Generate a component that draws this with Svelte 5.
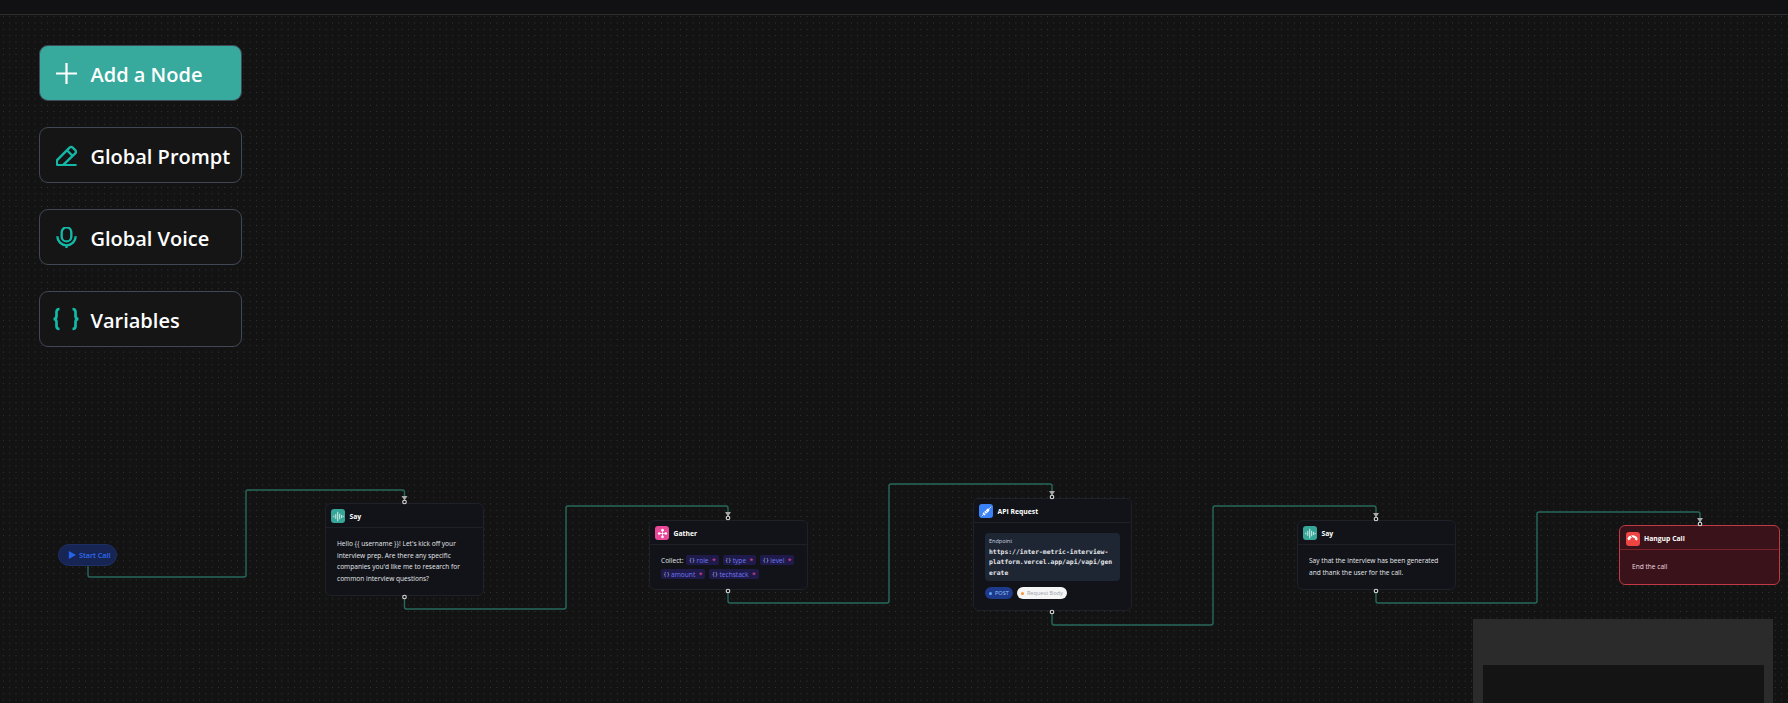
<script>
  const edges = [
    [88,566,577,246,490,404.5,497],
    [404.5,597,609,566,506,728,516],
    [728,591,603,889,484,1052,495],
    [1052,612,625,1213,506,1376,517],
    [1376,591,603,1537,512,1700,522]
  ];
  const r = 2;
  function d([x1,y1,y2,x2,y3,x3,y4]) {
    return `M${x1} ${y1}V${y2-r}Q${x1} ${y2} ${x1+r} ${y2}H${x2-r}Q${x2} ${y2} ${x2} ${y2-r}V${y3+r}Q${x2} ${y3} ${x2+r} ${y3}H${x3-r}Q${x3} ${y3} ${x3} ${y3+r}V${y4}`;
  }
  const targets = [[404.5,502],[728,518],[1052,497],[1376,519],[1700,524]];
  const sources = [[404.5,597],[728,591],[1052,612],[1376,591]];
  const vars = ['role','type','level','amount','techstack'];
</script>

<div class="page">
  <header class="topbar"></header>

  <aside class="actions">
    <button class="act primary">
      <svg class="ico" viewBox="0 0 24 24"><path d="M12 0v24M0 12h24"/></svg>
      <span>Add a Node</span>
    </button>
    <button class="act">
      <svg class="ico teal" viewBox="0 0 24 24"><path d="M0.500 23h23M1 23v-5.500L15.500 3a2.600 2.600 0 0 1 3.600 0l2.900 2.900a2.600 2.600 0 0 1 0 3.600L8 23M12.500 6l6 6"/></svg>
      <span>Global Prompt</span>
    </button>
    <button class="act">
      <svg class="ico teal" viewBox="0 0 24 24"><rect x="6.500" y="0.500" width="11" height="16" rx="5.500"/><path d="M1.500 10.500a10.500 10.500 0 0 0 21 0M12 21v3"/></svg>
      <span>Global Voice</span>
    </button>
    <button class="act">
      <svg class="ico teal wide" viewBox="0 0 28 24"><path d="M7.500 2C5 2 4.500 3 4.500 5v4c0 1.600-1 3-3 3 2 0 3 1.400 3 3v4c0 2 .5 3 3 3M20.500 2c2.500 0 3 1 3 3v4c0 1.600 1 3 3 3-2 0-3 1.400-3 3v4c0 2-.5 3-3 3"/></svg>
      <span>Variables</span>
    </button>
  </aside>

  <svg class="edges" width="1788" height="703">
    {#each edges as e}
      <path class="edge" d={d(e)} />
    {/each}
  </svg>

  <div class="start">
    <svg viewBox="0 0 10 10" width="8" height="8"><path d="M1 0 10 5 1 10Z" fill="#2563eb"/></svg>
    <span>Start Call</span>
  </div>

  <section class="node say1">
    <div class="nhead">
      <span class="nicon green"><svg viewBox="0 0 14 14"><path d="M1 6v2M3.500 4v6M6 1v12M8.500 3.500v7M11 5v4M13 6.200v1.600"/></svg></span>
      <b>Say</b>
    </div>
    <p class="nbody">Hello {'{{'} username {'}}'}! Let's kick off your interview prep. Are there any specific companies you'd like me to research for common interview questions?</p>
  </section>

  <section class="node gather">
    <div class="nhead">
      <span class="nicon pink"><svg viewBox="0 0 14 14"><path d="M7 3v8M3 7h8"/><circle cx="7" cy="2.800" r="1.700" class="fill"/><circle cx="7" cy="11.200" r="1.700" class="fill"/><circle cx="2.800" cy="7" r="1.700" class="fill"/><circle cx="11.200" cy="7" r="1.700" class="fill"/></svg></span>
      <b>Gather</b>
    </div>
    <div class="collect">
      <span class="clabel">Collect:</span>
      {#each vars as v}
        <span class="chip"><i>{'{ }'}</i>{v}<em>*</em></span>
      {/each}
    </div>
  </section>

  <section class="node api">
    <div class="nhead">
      <span class="nicon blue"><svg viewBox="0 0 14 14"><path d="M1 13l3-3M13 1 10 4" /><path class="fill" d="M3 8 6 11 4.500 12 2 9.500ZM6 5.500l3-2.500 2 2-2.500 3.500ZM5.500 6l2.500 2.500-1.500 1.500L4 7.500Z"/></svg></span>
      <b>API Request</b>
    </div>
    <div class="apibody">
      <div class="endpoint">
        <div class="eplabel">Endpoint</div>
        <code>https://inter-metric-interview-platform.vercel.app/api/vapi/generate</code>
      </div>
      <div class="tags">
        <span class="tag post"><i></i>POST</span>
        <span class="tag reqbody"><i></i>Request Body</span>
      </div>
    </div>
  </section>

  <section class="node say2">
    <div class="nhead">
      <span class="nicon green"><svg viewBox="0 0 14 14"><path d="M1 6v2M3.500 4v6M6 1v12M8.500 3.500v7M11 5v4M13 6.200v1.600"/></svg></span>
      <b>Say</b>
    </div>
    <p class="nbody">Say that the interview has been generated and thank the user for the call.</p>
  </section>

  <section class="node hangup">
    <div class="nhead">
      <span class="nicon red"><svg viewBox="0 0 14 14"><path class="fill" d="M0.500 7C1.500 4.500 4.500 3 7 3c1.500 0 3 .5 4.500 1.500 1.500 1 2 2 2 3.500l-1 1.500-2.500-1V6.500C8.500 6 6 6 4.500 6.500v1.500L2 9.500Z"/><path class="cut" d="M3 1l9 11"/></svg></span>
      <b>Hangup Call</b>
    </div>
    <p class="nbody">End the call</p>
  </section>

  <svg class="edges top" width="1788" height="703">
    {#each targets as [x, y]}
      <path class="arrow" d="M{x-3} {y-6}h6l-3 4.500z" />
      <circle class="handle" cx={x} cy={y} r="1.800" />
    {/each}
    {#each sources as [x, y]}
      <circle class="handle" cx={x} cy={y} r="1.800" />
    {/each}
  </svg>

  <div class="minimap"><div class="mini-inner"></div></div>
</div>

<style>
  :global(body) {
    margin: 0;
    background: #131313;
    overflow: hidden;
  }
  .page {
    position: relative;
    width: 1788px;
    height: 703px;
    overflow: hidden;
    font-family: "Open Sans", "Liberation Sans", sans-serif;
    background-color: #131313;
    background-image: radial-gradient(circle, #3a3a3a 0.5px, transparent 0.6px);
    background-size: 6.33px 6.33px;
    background-position: 0.2px 13.5px;
  }
  .topbar {
    height: 14px;
    background: #111113;
    border-bottom: 1px solid #2e2e2e;
  }
  .actions {
    display: flex;
    flex-direction: column;
    gap: 26px;
    width: 203px;
    padding: 30px 0 0 39px;
    position: relative;
    z-index: 2;
  }
  .act {
    box-sizing: border-box;
    display: flex;
    align-items: center;
    gap: 13.500px;
    height: 56px;
    width: 203px;
    padding: 2px 0 0 16px;
    border: 1px solid #414855;
    border-radius: 9px;
    background: #151515;
    color: #fff;
    font-family: "Open Sans", sans-serif;
    font-weight: 600;
    font-size: 20px;
    text-align: left;
  }
  .act.primary {
    background: #37a99d;
  }
  .ico {
    width: 21px;
    height: 21px;
    flex: none;
    fill: none;
    stroke: #fff;
    stroke-width: 2.500;
    margin: -2px 0 0;
  }
  .ico.teal {
    stroke: #14b8a6;
    stroke-width: 2.700;
  }
  .ico.wide {
    width: 28px;
    height: 24px;
    margin: -2px -3px 0 -4px;
  }
  .edges {
    position: absolute;
    left: 0;
    top: 0;
    pointer-events: none;
  }
  .edges.top {
    z-index: 3;
  }
  .edge {
    fill: none;
    stroke: #276a5c;
    stroke-width: 1.400;
  }
  .arrow {
    fill: #a9a9a9;
  }
  .handle {
    fill: #141414;
    stroke: #ddd;
    stroke-width: 1.100;
  }
  .start {
    position: absolute;
    left: 58px;
    top: 544px;
    width: 59px;
    height: 22px;
    box-sizing: border-box;
    display: flex;
    align-items: center;
    gap: 3px;
    padding-left: 9px;
    border-radius: 11px;
    border: 1px solid #1d2f63;
    background: #172554;
    color: #2f6df2;
    font-size: 7.200px;
    font-weight: 600;
  }
  .node {
    position: absolute;
    box-sizing: border-box;
    width: 159px;
    border: 1px solid #1f2128;
    border-radius: 6px;
    background: #111318;
    color: #e5e7eb;
    font-size: 6.600px;
  }
  .say1 { left: 325px; top: 503px; height: 93px; }
  .gather { left: 649px; top: 520px; height: 70px; }
  .api { left: 973px; top: 498px; height: 113px; }
  .say2 { left: 1297px; top: 520px; height: 70px; }
  .hangup {
    left: 1619px;
    top: 525px;
    width: 161px;
    height: 60px;
    border: 1.500px solid #c13a45;
    background: #3a1219;
    color: #f0dde0;
  }
  .nhead {
    display: flex;
    align-items: center;
    gap: 4.500px;
    padding: 5px 5px 4px;
    border-bottom: 1px solid #1e2027;
    color: #fff;
  }
  .hangup .nhead {
    border-color: #7a2029;
    padding: 5.500px 5.500px 3.500px;
  }
  .nhead b {
    font-weight: 700;
    font-size: 6.800px;
  }
  .nicon {
    width: 14px;
    height: 14px;
    border-radius: 3px;
    display: flex;
    align-items: center;
    justify-content: center;
    flex: none;
  }
  .nicon svg {
    width: 11px;
    height: 11px;
    fill: none;
    stroke: #fff;
    stroke-width: 1;
  }
  .nicon .fill { fill: #fff; stroke: none; }
  .nicon .cut { stroke: #ef4444; stroke-width: 1.200; }
  .green { background: #36a698; }
  .pink { background: #ec4899; }
  .blue { background: #3b82f6; }
  .red { background: #ef4444; }
  .nbody {
    margin: 0;
    padding: 10px 11px;
    line-height: 11.700px;
  }
  .hangup .nbody {
    padding: 11px 12px;
  }
  .collect {
    display: flex;
    flex-wrap: wrap;
    align-items: center;
    gap: 4px;
    padding: 10px 11px 0;
  }
  .clabel { margin-right: -1px; }
  .chip {
    display: inline-flex;
    align-items: center;
    height: 10px;
    padding: 0 3px;
    border-radius: 2px;
    background: #1e1b4b;
    color: #7377f0;
  }
  .chip i {
    font-style: normal;
    font-size: 5px;
    margin-right: 2px;
    color: #c7c8f5;
  }
  .chip em {
    font-style: normal;
    color: #ec4899;
    margin-left: 3.500px;
  }
  .apibody {
    padding: 10px 11px 0;
  }
  .endpoint {
    background: #1e2533;
    border-radius: 4px;
    padding: 4px 6px 4px 4px;
    height: 48px;
    box-sizing: border-box;
  }
  .eplabel {
    font-size: 5.500px;
    color: #cbd5e1;
    margin-bottom: 1.500px;
  }
  code {
    display: block;
    font-family: "DejaVu Sans Mono", monospace;
    font-size: 6.400px;
    line-height: 10.500px;
    overflow-wrap: anywhere;
    color: #e5e7eb;
    font-weight: 600;
  }
  .tags {
    display: flex;
    gap: 4px;
    margin-top: 6px;
  }
  .tag {
    display: inline-flex;
    align-items: center;
    gap: 3px;
    height: 12px;
    padding: 0 4px;
    border-radius: 6px;
    font-size: 5.600px;
  }
  .tag i {
    width: 3px;
    height: 3px;
    border-radius: 50%;
  }
  .post { background: #1e3a8a; color: #93c5fd; }
  .post i { background: #60a5fa; }
  .reqbody { background: #f5f5f5; color: #9ca3af; }
  .reqbody i { background: #fb923c; }
  .minimap {
    position: absolute;
    left: 1473px;
    top: 619px;
    width: 300px;
    height: 84px;
    box-sizing: border-box;
    padding: 46px 9px 0 10px;
    background: #2b2b2b;
  }
  .mini-inner {
    height: 100%;
    background: #141414;
  }
</style>
